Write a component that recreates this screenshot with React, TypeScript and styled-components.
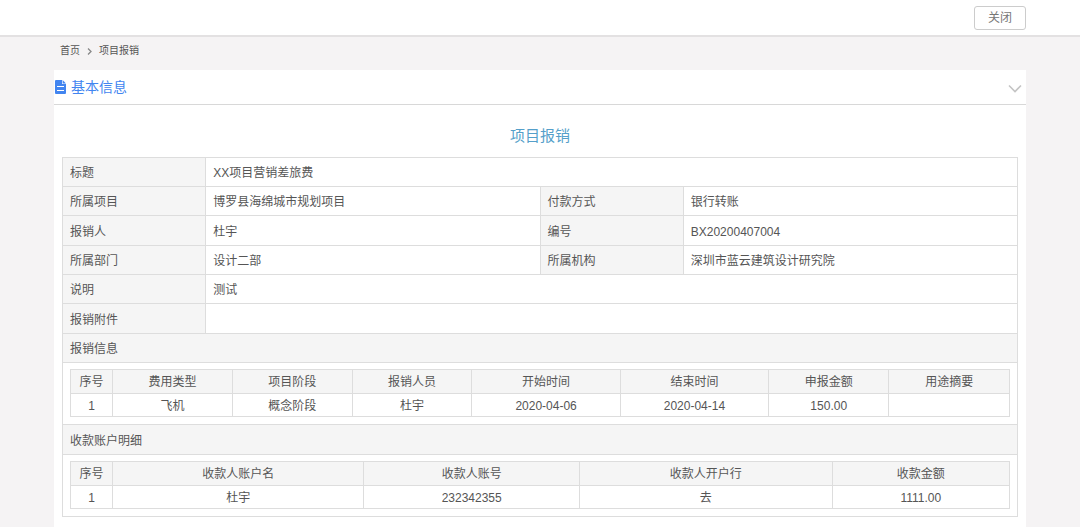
import React, { useState } from "react";
import styled, { createGlobalStyle } from "styled-components";

const GlobalStyle = createGlobalStyle`
  * { box-sizing: border-box; }
  body {
    margin: 0;
    background: #f5f3f4;
    color: #555;
    font-family: "Liberation Sans", "Noto Sans CJK SC", sans-serif;
    font-size: 12px;
    line-height: 18px;
  }
`;

const Page = styled.div`
  display: flex;
  flex-direction: column;
  min-height: 100vh;
`;

const TopBar = styled.header`
  height: 37px;
  padding: 6px 5% 0;
  display: flex;
  justify-content: flex-end;
  align-items: flex-start;
  background: #fff;
  border-bottom: 2px solid #e3e1e2;
`;

const CloseButton = styled.button`
  width: 52px;
  height: 24px;
  padding: 0;
  border: 1px solid #ccc;
  border-radius: 3px;
  background: #fff;
  color: #777;
  font: inherit;
  cursor: pointer;
`;

const Content = styled.main`
  flex: 1;
  display: flex;
  flex-direction: column;
  margin: 0 5%;
`;

const Breadcrumb = styled.nav`
  display: flex;
  align-items: center;
  gap: 6px;
  height: 33px;
  padding: 0 6px 6px;
  font-size: 10px;

  svg { margin-top: 2px; }
`;

const Crumb = styled.a`
  color: #555;
  text-decoration: none;
`;

const Panel = styled.section`
  flex: 1;
  background: #fff;
`;

const PanelHeader = styled.div`
  display: flex;
  align-items: center;
  justify-content: space-between;
  height: 35px;
  padding: 0 4px 0 1px;
  border-bottom: 1px solid #d8d8d8;
`;

const PanelTitle = styled.h2`
  display: flex;
  align-items: center;
  gap: 4px;
  margin: 0;
  color: #4285f0;
  font-size: 14px;
  font-weight: 400;
`;

const ToggleButton = styled.button`
  display: flex;
  padding: 3px 0 0;
  border: 0;
  background: none;
  cursor: pointer;
`;

const PanelBody = styled.div`
  padding: 21px 8px 11px;
`;

const FormTitle = styled.h1`
  margin: 0 0 11px;
  color: #559fca;
  font-size: 15px;
  font-weight: 400;
  line-height: 20px;
  text-align: center;
`;

const Table = styled.table`
  width: 100%;
  border-collapse: collapse;
  table-layout: fixed;
`;

const FormTable = styled(Table)`
  tr:nth-child(3n) { height: 30px; }
`;

const Row = styled.tr`
  height: 29px;
`;

const Label = styled.th`
  padding: 2px 7px 0;
  border: 1px solid #ddd;
  background: #f5f5f5;
  font-weight: 400;
  text-align: left;
`;

const Value = styled.td`
  padding: 2px 7px 0;
  border: 1px solid #ddd;
`;

const DetailCell = styled.td`
  padding: 6px 7px 7px;
  border: 1px solid #ddd;
`;

const DetailHeadRow = styled.tr`
  height: 24px;
`;

const DetailRow = styled.tr`
  height: 23px;
`;

const HeadCell = styled.th`
  padding: 1px 0 0;
  border: 1px solid #ddd;
  background: #f5f5f5;
  font-weight: 400;
  text-align: center;
`;

const DataCell = styled.td`
  padding: 1px 0 0;
  border: 1px solid #ddd;
  text-align: center;
`;

const Col = styled.col<{ $share: number }>`
  width: ${(p) => p.$share}%;
`;

type Column = { name: string; share: number };

const expenseColumns: Column[] = [
  { name: "序号", share: 4.5 },
  { name: "费用类型", share: 12.75 },
  { name: "项目阶段", share: 12.75 },
  { name: "报销人员", share: 12.75 },
  { name: "开始时间", share: 15.8 },
  { name: "结束时间", share: 15.8 },
  { name: "申报金额", share: 12.8 },
  { name: "用途摘要", share: 12.85 },
];
const expenseRows = [["1", "飞机", "概念阶段", "杜宇", "2020-04-06", "2020-04-14", "150.00", ""]];

const payeeColumns: Column[] = [
  { name: "序号", share: 4.5 },
  { name: "收款人账户名", share: 26.75 },
  { name: "收款人账号", share: 22.95 },
  { name: "收款人开户行", share: 26.9 },
  { name: "收款金额", share: 18.9 },
];
const payeeRows = [["1", "杜宇", "232342355", "去", "1111.00"]];

const fields: string[][] = [
  ["标题", "XX项目营销差旅费"],
  ["所属项目", "博罗县海绵城市规划项目", "付款方式", "银行转账"],
  ["报销人", "杜宇", "编号", "BX20200407004"],
  ["所属部门", "设计二部", "所属机构", "深圳市蓝云建筑设计研究院"],
  ["说明", "测试"],
  ["报销附件", ""],
];

function DetailTable({ label, columns, rows }: { label: string; columns: Column[]; rows: string[][] }) {
  return (
    <Table aria-label={label}>
      <colgroup>
        {columns.map((c) => <Col key={c.name} $share={c.share} />)}
      </colgroup>
      <thead>
        <DetailHeadRow>
          {columns.map((c) => <HeadCell key={c.name} scope="col">{c.name}</HeadCell>)}
        </DetailHeadRow>
      </thead>
      <tbody>
        {rows.map((row) => (
          <DetailRow key={row[0]}>
            {row.map((value, i) => <DataCell key={i}>{value}</DataCell>)}
          </DetailRow>
        ))}
      </tbody>
    </Table>
  );
}

const DocumentIcon = () => (
  <svg width="12" height="14" viewBox="0 0 12 14" aria-hidden="true">
    <path d="M1 0h6v4h4v9a1 1 0 0 1-1 1H1a1 1 0 0 1-1-1V1a1 1 0 0 1 1-1z" fill="#4285f0" />
    <path d="M7.6 0L11 3.4H7.6z" fill="#4285f0" />
    <path d="M2 6.5h7M2 10.5h7" stroke="#fff" strokeWidth="1" />
  </svg>
);

export default function App() {
  const [open, setOpen] = useState(true);
  return (
    <Page>
      <GlobalStyle />
      <TopBar>
        <CloseButton type="button">关闭</CloseButton>
      </TopBar>
      <Content>
        <Breadcrumb aria-label="breadcrumb">
          <Crumb href="#">首页</Crumb>
          <svg width="7" height="7" viewBox="0 0 7 7" fill="none" stroke="#888" aria-hidden="true">
            <path d="M2 0.5l3 3-3 3" strokeWidth="1.3" />
          </svg>
          <Crumb href="#" aria-current="page">项目报销</Crumb>
        </Breadcrumb>
        <Panel>
          <PanelHeader>
            <PanelTitle><DocumentIcon />基本信息</PanelTitle>
            <ToggleButton type="button" aria-label="基本信息" aria-expanded={open} onClick={() => setOpen(!open)}>
              <svg width="14" height="9" viewBox="0 0 14 9" fill="none" stroke="#c4c4c4" aria-hidden="true">
                <path d="M1 1.5l6 6 6-6" strokeWidth="1.6" />
              </svg>
            </ToggleButton>
          </PanelHeader>
          {open && (
            <PanelBody>
              <FormTitle>项目报销</FormTitle>
              <FormTable>
                <colgroup>
                  <Col $share={15} />
                  <Col $share={35} />
                  <Col $share={15} />
                  <Col $share={35} />
                </colgroup>
                <tbody>
                  {fields.map(([label, value, label2, value2]) => (
                    <Row key={label}>
                      <Label scope="row">{label}</Label>
                      <Value colSpan={label2 ? 1 : 3}>{value}</Value>
                      {label2 && <Label scope="row">{label2}</Label>}
                      {label2 && <Value>{value2}</Value>}
                    </Row>
                  ))}
                  <Row><Label colSpan={4}>报销信息</Label></Row>
                  <tr>
                    <DetailCell colSpan={4}>
                      <DetailTable label="报销信息" columns={expenseColumns} rows={expenseRows} />
                    </DetailCell>
                  </tr>
                  <Row><Label colSpan={4}>收款账户明细</Label></Row>
                  <tr>
                    <DetailCell colSpan={4}>
                      <DetailTable label="收款账户明细" columns={payeeColumns} rows={payeeRows} />
                    </DetailCell>
                  </tr>
                </tbody>
              </FormTable>
            </PanelBody>
          )}
        </Panel>
      </Content>
    </Page>
  );
}
